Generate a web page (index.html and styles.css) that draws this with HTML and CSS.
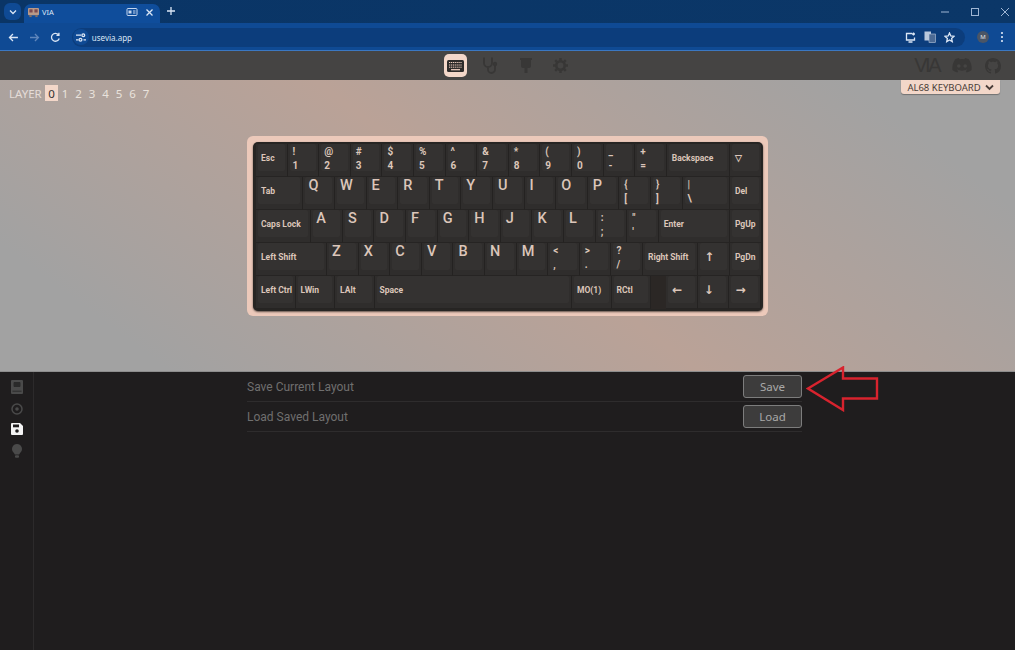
FILE: index.html
```html
<!doctype html>
<html lang="en">
  <head>
    <meta charset="UTF-8" />
    <title>VIA</title>
    <link rel="stylesheet" href="styles.css">
  </head>
  <body>
    <header class="tabstrip">
      <button class="tab-list"><svg width="10" height="10" viewBox="0 0 10 10"><path d="M2 3.5 5 6.5 8 3.5" class="line"/></svg></button>
      <div class="tab">
        <svg width="13" height="11" viewBox="0 0 14 12"><rect x="1" y="1" width="12" height="8" rx="1" fill="#b99a88"/><rect x="2.5" y="2.5" width="3.5" height="3.5" fill="#7d4a50"/><rect x="8" y="2.5" width="3.5" height="3.5" fill="#7d4a50"/><rect x="2.5" y="9" width="2.500" height="2" fill="#8a6f60"/><rect x="9" y="9" width="2.500" height="2" fill="#8a6f60"/></svg>
        <span class="tab-title">VIA</span>
        <svg class="tab-cast" width="12" height="10" viewBox="0 0 12 10"><rect x="1" y="1.5" width="10" height="7" rx="1" fill="none" stroke="#c5d6ee"/><rect x="2.500" y="3.500" width="3" height="3" fill="#c5d6ee"/><path d="M7 4H9.500M7 6H9.500" stroke="#c5d6ee"/></svg>
        <svg width="9" height="9" viewBox="0 0 9 9"><path d="M1.5 1.5 7.5 7.5M7.5 1.5 1.5 7.5" class="line"/></svg>
      </div>
      <svg class="new-tab" width="10" height="10" viewBox="0 0 10 10"><path d="M5 1V9M1 5H9" class="line"/></svg>
      <div class="window-btns">
        <svg width="10" height="10" viewBox="0 0 10 10"><path d="M1 5H9" class="line dim"/></svg>
        <svg width="10" height="10" viewBox="0 0 10 10"><rect x="1.5" y="1.5" width="7" height="7" fill="none" class="line dim"/></svg>
        <svg width="10" height="10" viewBox="0 0 10 10"><path d="M1 1 9 9M9 1 1 9" class="line dim"/></svg>
      </div>
    </header>

    <div class="toolbar">
      <svg width="11" height="11" viewBox="0 0 11 11"><path d="M10 5.5H1.5M5 2 1.5 5.5 5 9" class="line"/></svg>
      <svg width="11" height="11" viewBox="0 0 11 11"><path d="M1 5.5H9.5M6 2 9.5 5.5 6 9" class="line faint"/></svg>
      <svg width="11" height="11" viewBox="0 0 11 11"><path d="M9.3 6.5A4 4 0 1 1 8.5 2.6M9 .8V3.3H6.5" class="line"/></svg>
      <div class="omnibox">
        <span class="site-info"><svg width="10" height="9" viewBox="0 0 10 9"><path d="M0 2.2H5M0 6.8H2.5M7.5 6.8H10" class="line"/><circle cx="7.3" cy="2.2" r="1.4" class="line" fill="none"/><circle cx="4.5" cy="6.8" r="1.4" class="line" fill="none"/></svg></span>
        <span class="url">usevia.app</span>
        <span class="omni-icons">
          <svg width="11" height="11" viewBox="0 0 11 11"><path d="M7 1.5H1.5V8H9.5V5.5M3.5 10H7.5" class="line"/><path d="M8.5 .5V3.5M7 2H10" class="line"/></svg>
          <svg width="12" height="12" viewBox="0 0 12 12"><rect x=".5" y=".5" width="6.5" height="9" fill="#b9c8dd"/><rect x="5" y="3" width="6.5" height="8.5" fill="#4c6a94" stroke="#b9c8dd" stroke-width=".6"/></svg>
          <svg width="11" height="11" viewBox="0 0 11 11"><path d="M5.5 1 6.8 4 10 4.3 7.6 6.4 8.3 9.6 5.5 8 2.7 9.6 3.4 6.4 1 4.3 4.2 4Z" class="line" fill="none"/></svg>
        </span>
      </div>
      <span class="avatar">M</span>
      <svg width="4" height="12" viewBox="0 0 4 12"><circle cx="2" cy="2" r="1.1" fill="#dbe6f5"/><circle cx="2" cy="6" r="1.1" fill="#dbe6f5"/><circle cx="2" cy="10" r="1.1" fill="#dbe6f5"/></svg>
    </div>

    <nav class="via-nav">
      <div class="nav-tabs">
        <span class="nav-tab active"><svg width="17" height="12" viewBox="0 0 17 12"><rect width="17" height="12" rx="1.5" fill="#2d2b2a"/><path d="M2 2.5H15M2 5H15M2 7.2H15" stroke="#f0d0c2" stroke-width="1" stroke-dasharray="1.2 .7"/><path d="M4 9.7H13" stroke="#f0d0c2" stroke-width="1.2"/></svg></span>
        <span class="nav-tab"><svg width="16" height="17" viewBox="0 0 16 17"><path d="M2 1.5H1V6A4 4 0 0 0 9 6V1.5H8M5 10V12.5A3.5 3.5 0 0 0 12 12.5V9" fill="none" class="nav-stroke" stroke-width="1.8"/><circle cx="12" cy="7" r="2.2" class="nav-fill"/></svg></span>
        <span class="nav-tab"><svg width="12" height="17" viewBox="0 0 12 17"><path d="M0 1H12V3H11V9A2 2 0 0 1 9 11H7.5V16H4.5V11H3A2 2 0 0 1 1 9V3H0Z" class="nav-fill"/></svg></span>
        <span class="nav-tab"><svg width="15" height="15" viewBox="0 0 15 15"><circle cx="7.5" cy="7.5" r="4.2" fill="none" class="nav-stroke" stroke-width="2.6"/><path d="M7.5 0V3M7.5 12V15M0 7.5H3M12 7.5H15M2.2 2.2 4.3 4.3M10.7 10.7 12.8 12.8M12.8 2.2 10.7 4.3M4.3 10.7 2.2 12.8" class="nav-stroke" stroke-width="2.4"/></svg></span>
      </div>
      <div class="nav-links">
        <span class="via-logo">VIA</span>
        <svg width="20" height="15" viewBox="0 0 20 15"><path d="M16.8 1.3A16 16 0 0 0 13 .1L12.5 1.2A15 15 0 0 0 7.5 1.2L7 .1A16 16 0 0 0 3.200 1.300C.8 4.900 .1 8.400 .4 11.900A16 16 0 0 0 5.300 14.400L6.300 12.700L4.700 12L5.100 11.600A11.500 11.500 0 0 0 14.900 11.600L15.300 12L13.700 12.700L14.700 14.400A16 16 0 0 0 19.600 11.900C20 7.800 19 4.400 16.800 1.300Z" class="nav-fill"/><circle cx="6.800" cy="8" r="1.800" fill="#454443"/><circle cx="13.200" cy="8" r="1.800" fill="#454443"/></svg>
        <svg width="16" height="16" viewBox="0 0 16 16"><path d="M8 0C3.580 0 0 3.580 0 8c0 3.540 2.290 6.530 5.470 7.590.4.070.55-.17.55-.38 0-.19-.01-.82-.01-1.490-2.010.37-2.530-.49-2.690-.94-.09-.23-.48-.94-.82-1.130-.28-.15-.68-.52-.01-.53.630-.01 1.080.58 1.230.82.720 1.210 1.870.87 2.330.66.070-.52.280-.87.510-1.070-1.780-.2-3.640-.89-3.640-3.950 0-.87.310-1.590.820-2.150-.08-.2-.36-1.020.08-2.120 0 0 .67-.21 2.200.82.640-.18 1.320-.27 2-.27s1.360.09 2 .27c1.530-1.040 2.200-.82 2.200-.82.440 1.100.16 1.920.08 2.120.51.560.82 1.270.82 2.150 0 3.070-1.870 3.750-3.650 3.950.29.250.54.730.54 1.480 0 1.070-.01 1.930-.01 2.200 0 .21.150.46.550.38A8.010 8.010 0 0 0 16 8c0-4.420-3.580-8-8-8z" class="nav-fill"/></svg>
      </div>
    </nav>

    <section class="stage">
      <div class="stage-top">
        <div class="layers">
          <span class="layer-label">LAYER</span>
          <span class="layer active">0</span>
          <span class="layer">1</span>
          <span class="layer">2</span>
          <span class="layer">3</span>
          <span class="layer">4</span>
          <span class="layer">5</span>
          <span class="layer">6</span>
          <span class="layer">7</span>
        </div>
        <div class="kb-select">AL68 KEYBOARD <svg width="9" height="7" viewBox="0 0 9 7"><path d="M1 1.500 4.500 5 8 1.500" fill="none" stroke="#4a3d38" stroke-width="1.800"/></svg></div>
      </div>

      <div class="kb-case">
        <div class="kb-plate">
          <div class="kb-row">
            <div class="key"><span class="cap">Esc</span></div>
            <div class="key"><span class="cap two">!<br>1</span></div>
            <div class="key"><span class="cap two">@<br>2</span></div>
            <div class="key"><span class="cap two">#<br>3</span></div>
            <div class="key"><span class="cap two">$<br>4</span></div>
            <div class="key"><span class="cap two">%<br>5</span></div>
            <div class="key"><span class="cap two">^<br>6</span></div>
            <div class="key"><span class="cap two">&amp;<br>7</span></div>
            <div class="key"><span class="cap two">*<br>8</span></div>
            <div class="key"><span class="cap two">(<br>9</span></div>
            <div class="key"><span class="cap two">)<br>0</span></div>
            <div class="key"><span class="cap two">_<br>-</span></div>
            <div class="key"><span class="cap two">+<br>=</span></div>
            <div class="key u2"><span class="cap">Backspace</span></div>
            <div class="key"><span class="cap">▽</span></div>
          </div>
          <div class="kb-row">
            <div class="key u15"><span class="cap">Tab</span></div>
            <div class="key"><span class="cap alpha">Q</span></div>
            <div class="key"><span class="cap alpha">W</span></div>
            <div class="key"><span class="cap alpha">E</span></div>
            <div class="key"><span class="cap alpha">R</span></div>
            <div class="key"><span class="cap alpha">T</span></div>
            <div class="key"><span class="cap alpha">Y</span></div>
            <div class="key"><span class="cap alpha">U</span></div>
            <div class="key"><span class="cap alpha">I</span></div>
            <div class="key"><span class="cap alpha">O</span></div>
            <div class="key"><span class="cap alpha">P</span></div>
            <div class="key"><span class="cap two">{<br>[</span></div>
            <div class="key"><span class="cap two">}<br>]</span></div>
            <div class="key u15"><span class="cap two">|<br>\</span></div>
            <div class="key"><span class="cap">Del</span></div>
          </div>
          <div class="kb-row">
            <div class="key u175"><span class="cap">Caps Lock</span></div>
            <div class="key"><span class="cap alpha">A</span></div>
            <div class="key"><span class="cap alpha">S</span></div>
            <div class="key"><span class="cap alpha">D</span></div>
            <div class="key"><span class="cap alpha">F</span></div>
            <div class="key"><span class="cap alpha">G</span></div>
            <div class="key"><span class="cap alpha">H</span></div>
            <div class="key"><span class="cap alpha">J</span></div>
            <div class="key"><span class="cap alpha">K</span></div>
            <div class="key"><span class="cap alpha">L</span></div>
            <div class="key"><span class="cap two">:<br>;</span></div>
            <div class="key"><span class="cap two">"<br>'</span></div>
            <div class="key u225"><span class="cap">Enter</span></div>
            <div class="key"><span class="cap">PgUp</span></div>
          </div>
          <div class="kb-row">
            <div class="key u225"><span class="cap">Left Shift</span></div>
            <div class="key"><span class="cap alpha">Z</span></div>
            <div class="key"><span class="cap alpha">X</span></div>
            <div class="key"><span class="cap alpha">C</span></div>
            <div class="key"><span class="cap alpha">V</span></div>
            <div class="key"><span class="cap alpha">B</span></div>
            <div class="key"><span class="cap alpha">N</span></div>
            <div class="key"><span class="cap alpha">M</span></div>
            <div class="key"><span class="cap two">&lt;<br>,</span></div>
            <div class="key"><span class="cap two">&gt;<br>.</span></div>
            <div class="key"><span class="cap two">?<br>/</span></div>
            <div class="key u175"><span class="cap">Right Shift</span></div>
            <div class="key"><span class="cap arrow">↑</span></div>
            <div class="key"><span class="cap">PgDn</span></div>
          </div>
          <div class="kb-row">
            <div class="key u125"><span class="cap">Left Ctrl</span></div>
            <div class="key u125"><span class="cap">LWin</span></div>
            <div class="key u125"><span class="cap">LAlt</span></div>
            <div class="key u625"><span class="cap">Space</span></div>
            <div class="key u125"><span class="cap">MO(1)</span></div>
            <div class="key u125"><span class="cap">RCtl</span></div>
            <div class="kb-gap"></div>
            <div class="key"><span class="cap arrow">←</span></div>
            <div class="key"><span class="cap arrow">↓</span></div>
            <div class="key"><span class="cap arrow">→</span></div>
          </div>
        </div>
      </div>
    </section>

    <section class="panel">
      <aside class="side-menu">
        <svg width="12" height="14" viewBox="0 0 12 14"><path d="M1 0H11A1 1 0 0 1 12 1V13A1 1 0 0 1 11 14H1A1 1 0 0 1 0 13V1A1 1 0 0 1 1 0Z" fill="#4a4a4a"/><path d="M3 2.500H9V6.500H3ZM1.500 11.200H10.500" fill="#2a2a2a" stroke="#2a2a2a"/></svg>
        <svg width="12" height="12" viewBox="0 0 12 12"><circle cx="6" cy="6" r="5" fill="none" stroke="#4a4a4a" stroke-width="1.500"/><circle cx="6" cy="6" r="1.800" fill="#4a4a4a"/></svg>
        <svg width="12" height="12" viewBox="0 0 12 12"><path d="M1 0H9L12 3V11A1 1 0 0 1 11 12H1A1 1 0 0 1 0 11V1A1 1 0 0 1 1 0Z" fill="#f4f4f4"/><rect x="2" y="1.500" width="6" height="2.800" fill="#1f1d1e"/><circle cx="6" cy="8" r="1.800" fill="#1f1d1e"/></svg>
        <svg width="10" height="14" viewBox="0 0 10 14"><path d="M5 0A5 5 0 0 1 8.500 8.500C7.700 9.400 7.300 10 7.200 10.500H2.800C2.700 10 2.300 9.400 1.500 8.500A5 5 0 0 1 5 0Z" fill="#4a4a4a"/><rect x="3" y="11.300" width="4" height="2.500" rx="1" fill="#4a4a4a"/></svg>
      </aside>
      <main class="panel-main">
        <div class="setting">
          <span class="setting-label">Save Current Layout</span>
          <button class="btn">Save</button>
        </div>
        <div class="setting">
          <span class="setting-label">Load Saved Layout</span>
          <button class="btn">Load</button>
        </div>
      </main>
      <svg class="callout" width="76" height="46" viewBox="0 0 76 46"><path d="M2 22.500 37 1.500V12.500H71V32.500H37V44Z" fill="none" stroke="#d8232e" stroke-width="2.400"/></svg>
    </section>
  </body>
</html>
```

FILE: styles.css
```css
* {
  box-sizing: border-box;
}
html,
body {
  height: 100%;
}
body {
  margin: 0;
  display: flex;
  flex-direction: column;
  overflow: hidden;
  background-color: #1f1d1e;
  font-family: "Noto Sans", "Open Sans", sans-serif;
}
.line {
  fill: none;
  stroke: #dbe6f5;
  stroke-width: 1.3;
}
.line.dim {
  stroke: #9fb6d4;
  stroke-width: 1;
}
.line.faint {
  stroke: #5f86bb;
}

/* browser chrome */
.tabstrip {
  height: 23px;
  padding-left: 4px;
  display: flex;
  align-items: flex-end;
  background: linear-gradient(90deg, #0a3566, #0b3768);
}
.tab-list {
  width: 17px;
  height: 17px;
  margin-bottom: 3px;
  padding: 0;
  display: flex;
  align-items: center;
  justify-content: center;
  border: none;
  border-radius: 6px;
  background-color: #0f4a94;
}
.tab {
  width: 136px;
  height: 19px;
  margin-left: 3px;
  padding: 0 6px 3px 3px;
  display: flex;
  align-items: center;
  border-radius: 7px 7px 0 0;
  background-color: #0f4d9b;
}
.tab-title {
  margin-left: 2px;
  font-size: 7.5px;
  color: #dbe6f5;
}
.tab-cast {
  margin-left: auto;
  margin-right: 7px;
}
.new-tab {
  margin: 0 0 7px 6px;
}
.window-btns {
  margin-left: auto;
  margin-bottom: 6px;
  padding-right: 5px;
  display: flex;
  gap: 20px;
}
.toolbar {
  height: 28px;
  padding: 1px 11px 0 8px;
  display: flex;
  align-items: center;
  gap: 10px;
  border-bottom: 1px solid #3b78c2;
  background-color: #0f4a94;
}
.omnibox {
  width: 899px;
  height: 19px;
  margin-left: 1px;
  padding: 0 10px 0 1px;
  display: flex;
  align-items: center;
  border-radius: 10px;
  background-color: #0c3d7c;
}
.site-info {
  width: 16px;
  height: 16px;
  display: flex;
  align-items: center;
  justify-content: center;
  border-radius: 50%;
  background-color: #0f4a94;
}
.url {
  margin-left: 3px;
  font-size: 8px;
  color: #dbe6f5;
}
.omni-icons {
  margin-left: auto;
  display: flex;
  align-items: center;
  gap: 8px;
}
.avatar {
  width: 12px;
  height: 12px;
  margin: 0 1px 0 2px;
  display: flex;
  align-items: center;
  justify-content: center;
  flex-shrink: 0;
  border-radius: 50%;
  font-size: 6px;
  color: #e6e6e6;
  background-color: #4a5566;
}

/* via app nav */
.nav-fill {
  fill: #383736;
}
.nav-stroke {
  stroke: #383736;
}
.via-nav {
  height: 29px;
  padding-right: 14px;
  position: relative;
  display: flex;
  align-items: center;
  justify-content: flex-end;
  background-color: #454443;
}
.nav-tabs {
  position: absolute;
  left: 444px;
  top: 3px;
  display: flex;
  align-items: center;
  gap: 12px;
}
.nav-tab {
  width: 23px;
  height: 23px;
  display: flex;
  align-items: center;
  justify-content: center;
}
.nav-tab.active {
  border-radius: 5px;
  background-color: #f3d7c9;
}
.nav-links {
  display: flex;
  align-items: center;
  gap: 13px;
}
.via-logo {
  font-family: "Liberation Sans", sans-serif;
  font-size: 20px;
  letter-spacing: -2.5px;
  color: #383736;
}

/* keyboard stage */
.stage {
  height: 292px;
  display: flex;
  flex-direction: column;
  align-items: center;
  background: linear-gradient(37deg, #a2a2a2 12%, #baa297 50%, #a2a2a2 88%);
  border-bottom: 1px solid #8d8d8d;
}
.stage-top {
  width: 100%;
  height: 56px;
  padding: 0 15px 0 9px;
  display: flex;
  align-items: flex-start;
  justify-content: space-between;
}
.layers {
  margin-top: 5px;
  display: flex;
  align-items: center;
  font-size: 11.5px;
  color: #e9e2dd;
}
.layer-label {
  margin-right: 3px;
  color: #e4dcd8;
}
.layer {
  width: 13.5px;
  height: 16px;
  display: flex;
  align-items: center;
  justify-content: center;
}
.layer.active {
  color: #333;
  background-color: #f3d7c9;
}
.kb-select {
  width: 99px;
  height: 14px;
  display: flex;
  align-items: center;
  justify-content: center;
  gap: 4px;
  font-size: 9.5px;
  color: #4a3d38;
  border-radius: 0 0 3px 3px;
  background-color: #f3d7c9;
  box-shadow: 0 1px 1px rgba(0, 0, 0, 0.3);
}
.kb-case {
  width: 521px;
  height: 180px;
  padding: 6px 5px 5px 6px;
  border-radius: 6px;
  background-color: #ecc9ba;
}
.kb-plate {
  height: 100%;
  padding: 2px 2px 2px 3px;
  border-radius: 5px;
  background-color: #272523;
  box-shadow: 0 1px 2px rgba(0, 0, 0, 0.6);
}
.kb-row {
  --u: 31.6px;
  height: 33px;
  display: flex;
}
.key {
  width: var(--u);
  padding: 0 2px 5px 2px;
  flex-shrink: 0;
  background-color: #2f2d2c;
  border-right: 1px solid #242221;
  border-bottom: 1px solid #262423;
}
.u125 { width: calc(var(--u) * 1.25); }
.u15 { width: calc(var(--u) * 1.5); }
.u175 { width: calc(var(--u) * 1.75); }
.u2 { width: calc(var(--u) * 2); }
.u225 { width: calc(var(--u) * 2.25); }
.u625 { width: calc(var(--u) * 6.25); }
.kb-gap {
  width: calc(var(--u) * 0.5);
  background-color: #2b2725;
}
.cap {
  height: 100%;
  padding-left: 3px;
  display: flex;
  align-items: center;
  border-radius: 2px;
  font-family: Roboto, sans-serif;
  font-size: 8.5px;
  font-weight: 700;
  white-space: nowrap;
  color: #dcc6ba;
  background-color: #343231;
}
.cap.two {
  display: block;
  padding-top: 1px;
  font-size: 10px;
  line-height: 14px;
}
.cap.alpha {
  align-items: flex-start;
  padding-top: 0;
  font-size: 14.5px;
  font-weight: 500;
}
.cap.arrow {
  padding-left: 4px;
  font-family: "DejaVu Sans", sans-serif;
  font-size: 12px;
}

/* bottom panel */
.panel {
  flex: 1;
  position: relative;
  display: flex;
}
.side-menu {
  width: 34px;
  padding-top: 8px;
  display: flex;
  flex-direction: column;
  align-items: center;
  gap: 8.5px;
  border-right: 1px solid #2c2a2b;
}
.panel-main {
  flex: 1;
  display: flex;
  flex-direction: column;
  align-items: center;
}
.setting {
  width: 555px;
  height: 30px;
  display: flex;
  align-items: center;
  justify-content: space-between;
  border-bottom: 1px solid #2e2c2d;
}
.setting-label {
  font-family: Roboto, sans-serif;
  font-size: 12px;
  color: #706f6f;
}
.btn {
  width: 59px;
  height: 23px;
  padding: 0;
  font-family: inherit;
  font-size: 11.5px;
  color: #a9a9a9;
  border: 1px solid #7d7d7d;
  border-radius: 3px;
  background-color: #3d3c3c;
}
.callout {
  position: absolute;
  left: 806px;
  top: -6px;
}
```
